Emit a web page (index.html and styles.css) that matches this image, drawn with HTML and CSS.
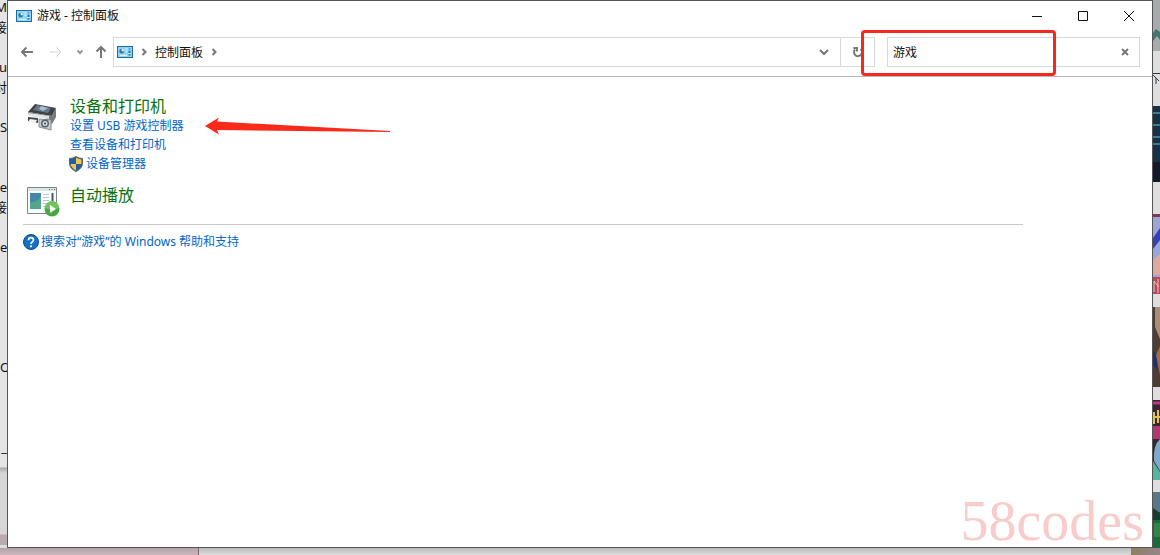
FILE: index.html
```html
<!DOCTYPE html>
<html lang="zh-CN">
<head>
  <meta charset="UTF-8">
  <meta name="viewport" content="width=device-width, initial-scale=1.0">
  <title>游戏 - 控制面板</title>
  <link rel="stylesheet" href="styles.css">
</head>
<body>
  <!-- shared icon -->
  <svg class="defs" width="0" height="0" aria-hidden="true">
    <symbol id="panel-icon" viewBox="0 0 16 12">
      <rect x=".5" y=".5" width="15" height="11" fill="#8fd4f2" stroke="#1c6ba0"/>
      <circle cx="4.7" cy="5.2" r="2.4" fill="#237fa8"/>
      <path d="M4.7 5.2V2.8A2.4 2.4 0 0 1 7.1 5.2z" fill="#e9faff"/>
      <path d="M8.5 3h2M8.5 5.2h2M3 9.3h7" stroke="#e9faff"/>
      <path d="M12.5 2.5v7" stroke="#1c7cb5" stroke-width="2"/>
      <path d="M11.2 4h2.6M11.2 7.5h2.6" stroke="#d9f5ff"/>
    </symbol>
  </svg>

  <aside class="behind-left">
    <span class="row-1">M</span>
    <span class="row-2">接</span>
    <span class="row-4">u</span>
    <span class="row-5">对</span>
    <span class="row-7 cut">Se</span>
    <span class="row-10">e</span>
    <span class="row-11">接</span>
    <span class="row-13 cut">es</span>
    <span class="row-19 cut">O</span>
    <span class="row-23">_</span>
  </aside>

  <div class="window">
    <header class="title-bar">
      <svg class="panel-icon" width="16" height="12"><use href="#panel-icon"/></svg>
      <h1>游戏 - 控制面板</h1>
      <div class="window-buttons">
        <button type="button" aria-label="最小化"><svg width="10" height="10"><path d="M0 5.5h10"/></svg></button>
        <button type="button" aria-label="最大化"><svg width="10" height="10"><path d="M.5.5h9v9h-9z"/></svg></button>
        <button type="button" aria-label="关闭"><svg width="10" height="10"><path d="M0 0l10 10M10 0L0 10"/></svg></button>
      </div>
    </header>

    <nav class="toolbar">
      <div class="nav-buttons">
        <button type="button" aria-label="后退"><svg width="14" height="12"><path d="M13 6H2M6.500 1.500L2 6l4.500 4.500"/></svg></button>
        <button type="button" class="disabled" aria-label="前进" disabled><svg width="14" height="12"><path d="M1 6h11M7.500 1.500L12 6l-4.500 4.500"/></svg></button>
        <button type="button" class="small" aria-label="最近浏览的位置"><svg width="8" height="6"><path d="M1.500 1.500L4 4l2.500-2.500"/></svg></button>
        <button type="button" aria-label="上移"><svg width="12" height="14"><path d="M6 13V2M1.500 6.500L6 2l4.500 4.500"/></svg></button>
      </div>
      <div class="address">
        <svg class="panel-icon" width="16" height="12"><use href="#panel-icon"/></svg>
        <svg class="chevron" width="6" height="8"><path d="M1.500 1L4.500 4l-3 3"/></svg>
        <a href="#">控制面板</a>
        <svg class="chevron" width="6" height="8"><path d="M1.500 1L4.500 4l-3 3"/></svg>
        <button type="button" class="history" aria-label="以前的位置"><svg width="10" height="8"><path d="M1 2l4 4 4-4"/></svg></button>
        <button type="button" class="refresh" aria-label="刷新"><svg width="12" height="12"><path d="M3 3.500A4 4 0 1 0 8.500 3M1.500 2H5v3.500"/></svg></button>
      </div>
      <div class="search">
        <input type="text" value="游戏" aria-label="搜索控制面板">
        <button type="button" aria-label="清除"><svg width="8" height="8"><path d="M1 1l6 6M7 1L1 7"/></svg></button>
        <div class="highlight"></div>
      </div>
    </nav>

    <main>
      <section class="result">
        <svg class="result-icon" viewBox="0 0 32 32" width="32" height="32">
          <path d="M9 3l21 4-4 8L2 11z" fill="#3c4248"/>
          <path d="M11 4l14 3-3 5-15-3z" fill="#677684"/>
          <path d="M15 5l7 2-5 3-4-2z" fill="#a9bfcc"/>
          <path d="M2 11l24 4 4-8v9l-4 7-6-1v-5L3 14z" fill="#75797c"/>
          <path d="M3 12l20 3v3L3 15z" fill="#e2e4e5"/>
          <path d="M2 16l10 1v5L2 20z" fill="#44494d"/>
          <path d="M4 18l7 1-2 4-7-2z" fill="#f1f2f2"/>
          <path d="M13 18l12 1v10l-12-3z" fill="#c9cccd" stroke="#888d90"/>
          <circle cx="19" cy="22.500" r="4" fill="#596166"/>
          <circle cx="19" cy="22.500" r="2.500" fill="#d2dde2"/>
          <circle cx="19" cy="22.500" r="1" fill="#31414a"/>
        </svg>
        <div>
          <h2><a href="#">设备和打印机</a></h2>
          <ul>
            <li><a href="#">设置 USB 游戏控制器</a></li>
            <li><a href="#">查看设备和打印机</a></li>
            <li class="admin">
              <svg width="14" height="16" viewBox="0 0 14 16">
                <path d="M7 .5Q10 2.500 13.500 2.500V7c0 4-3 7-6.500 8.500C3.500 14 .5 11 .5 7V2.500Q4 2.500 7 .5z" fill="#255f9b"/>
                <path d="M7 1.500Q10 3.300 12.500 3.400V8H7zM1.500 8H7v6.400C4 13 1.800 10.500 1.500 8z" fill="#f3c451"/>
                <path d="M7 .5Q10 2.500 13.500 2.500V7c0 4-3 7-6.500 8.500C3.500 14 .5 11 .5 7V2.500Q4 2.500 7 .5z" fill="none" stroke="#58616a"/>
              </svg>
              <a href="#">设备管理器</a>
            </li>
          </ul>
          <svg class="arrow" width="186" height="18" viewBox="0 0 186 18">
            <path d="M0 9L14 .5 12 4.500l173 9.500v1L12 13l2 4.500z"/>
          </svg>
        </div>
      </section>

      <section class="result">
        <svg class="result-icon autoplay" viewBox="0 0 34 32" width="34" height="32">
          <path d="M1.500 2.500h29v26h-29z" fill="#fbfcfc" stroke="#7b858b"/>
          <path d="M2 3h28v3H2z" fill="#dfe4e7"/>
          <path d="M23 4.500h1M25.500 4.500h1M28 4.500h1" stroke="#5b646a"/>
          <path d="M4 8h11v16H4z" fill="#4686ac"/>
          <path d="M4 24V17q7 1 11-6v13z" fill="#53a68c"/>
          <path d="M17 9.500h6M17 12.500h6M17 15.500h6M17 18.500h6M17 21.500h4" stroke="#bdc5ca"/>
          <path d="M26.500 8v8" stroke="#485967" stroke-width="2"/>
          <circle cx="26" cy="24" r="7.500" fill="#45a842"/>
          <path d="M19 23a7 7 0 0 1 14 0q-7 3-14 0z" fill="#73c45e"/>
          <path d="M24 20l6 4-6 4z" fill="#fff"/>
        </svg>
        <h2><a href="#">自动播放</a></h2>
      </section>

      <div class="help">
        <svg width="16" height="16" viewBox="0 0 16 16">
          <circle cx="8" cy="8" r="7.500" fill="#1272c4" stroke="#0a4b8c"/>
          <path d="M5.500 6.200C5.500 2.800 10.500 2.900 10.500 6c0 2-2.500 1.900-2.500 4" fill="none" stroke="#fff" stroke-width="1.700"/>
          <circle cx="8" cy="12.300" r="1.100" fill="#fff"/>
        </svg>
        <a href="#">搜索对“游戏”的 Windows 帮助和支持</a>
      </div>
    </main>
    <div class="watermark">58codes</div>
  </div>

  <!-- edge of the page open behind the window -->
  <svg class="behind-right" viewBox="0 0 7 548" preserveAspectRatio="none" aria-hidden="true">
    <path d="M0 0h7v548H0z" fill="#dedede"/>
    <path d="M0 0h7v51H0z" fill="#a8abab"/>
    <path d="M0 33l3-4 4 3v8l-3-4-4 5z" fill="#3f7772"/>
    <path d="M0 73.500h7" stroke="#29394a"/>
    <path d="M0 75l6 6M3 78v6" stroke="#243c55"/>
    <path d="M0 106h7v75H0z" fill="#163246"/>
    <path d="M0 113h7M0 125h7M0 137h7M0 144h7" stroke="#3f7b96" stroke-width="2"/>
    <path d="M0 162h7v20H0z" fill="#131b2a"/>
    <path d="M0 214h7v80H0z" fill="#9aa6d8"/>
    <path d="M0 214h7v3H0z" fill="#823756"/>
    <path d="M0 238l7-10v12l-7 9z" fill="#3540b5"/>
    <path d="M0 260l7-6v21H0z" fill="#dca99b"/>
    <path d="M0 277h7v17H0z" fill="#ba4a55"/>
    <path d="M1 292V281l4 5v7M5 279v8" fill="none" stroke="#f2c6c0"/>
    <path d="M0 307h7v80H0z" fill="#4f3c33"/>
    <path d="M2 307h5v32l-5-12z" fill="#a98e79"/>
    <path d="M0 350l4 5v15l-4-5z" fill="#252e67"/>
    <path d="M3 355l4-9v29z" fill="#a06d43"/>
    <path d="M0 400h7v80H0z" fill="#372536"/>
    <path d="M0 403h7" stroke="#be347f" stroke-width="3"/>
    <path d="M1 412v12M5 410v13M1 417h6" stroke="#e1c642" stroke-width="2"/>
    <path d="M0 426h7v13H0z" fill="#b2386f"/>
    <path d="M7 439Q0 445 1 461l6 10z" fill="#7fa9cb"/>
    <path d="M0 461l7 11v8H0z" fill="#54b4a0"/>
    <path d="M0 492h7v56H0z" fill="#1b6a38"/>
    <path d="M0 492h7v20H0z" fill="#59798a"/>
    <path d="M0 508l7 5v7H0z" fill="#183b34"/>
    <path d="M1 523h6v14H1z" fill="#34834b"/>
  </svg>

  <div class="behind-bottom">
    <div class="photo"></div>
    <div class="page"></div>
    <div class="thumb"></div>
  </div>
</body>
</html>
```
FILE: styles.css
```css
* {
  box-sizing: border-box;
}
body {
  display: grid;
  grid-template-columns: 7px 1fr 7px;
  grid-template-rows: 1fr 7px;
  min-height: 100vh;
  margin: 0;
  background: #dedede;
  color: #111;
  font-family: "Noto Sans", "Noto Sans CJK SC", sans-serif;
  font-size: 12px;
  line-height: 19px;
}
h1, h2, ul {
  margin: 0;
  padding: 0;
  font-size: 12px;
  font-weight: normal;
}
ul {
  list-style: none;
}
a {
  color: #0066cc;
  text-decoration: none;
}
a:hover {
  text-decoration: underline;
}
button {
  display: flex;
  align-items: center;
  justify-content: center;
  padding: 0;
  border: none;
  background: none;
}
svg {
  display: block;
  flex: none;
}
.defs {
  position: absolute;
}

/* What shows around the window */
.behind-left {
  display: grid;
  grid-template-columns: 7px;
  grid-auto-rows: 20px;
  align-content: start;
  justify-items: end;
  height: 0;
  min-height: 100%;
  margin-top: -3px;
  overflow: hidden;
  background: linear-gradient(#e4e4e4 470px, #aaa 471px, #d6d6d6 476px, #d6d6d6 537px, #b9aab0 538px);
  font-size: 13px;
  line-height: 20px;
}
.behind-left .cut {
  justify-self: start;
}
.row-1 { grid-row: 1; }
.row-2 { grid-row: 2; }
.row-4 { grid-row: 4; }
.row-5 { grid-row: 5; }
.row-7 { grid-row: 7; }
.row-10 { grid-row: 10; }
.row-11 { grid-row: 11; }
.row-13 { grid-row: 13; }
.row-19 { grid-row: 19; }
.row-23 { grid-row: 23; }
.behind-right {
  width: 100%;
  height: 100%;
}
.behind-bottom {
  display: flex;
  grid-column: 1 / -1;
}
.photo {
  width: 199px;
  border-right: 1px solid #77696f;
  background: linear-gradient(#b2a2a7, #cbb8be);
}
.page {
  flex: 1;
  background: linear-gradient(#bbb, #dcdcdc);
}
.thumb {
  width: 29px;
  background: linear-gradient(90deg, #8e8061, #96858b);
}

/* Window */
.window {
  position: relative;
  display: flex;
  flex-direction: column;
  min-width: 0;
  border: 1px solid #555;
  background: #fff;
}
.title-bar {
  display: flex;
  align-items: center;
  height: 29px;
  padding-left: 8px;
}
.title-bar h1 {
  margin-left: 5px;
}
.window-buttons {
  display: flex;
  margin-left: auto;
}
.window-buttons button {
  width: 46px;
  height: 29px;
}
.window-buttons path {
  fill: none;
  stroke: #111;
}

/* Toolbar */
.toolbar {
  display: flex;
  align-items: center;
  height: 47px;
  padding: 0 12px 2px;
  border-bottom: 1px solid #b5b9b7;
}
.toolbar path {
  fill: none;
  stroke: #777;
  stroke-width: 2;
}
.nav-buttons {
  display: flex;
  align-items: center;
  gap: 15px;
}
.nav-buttons .disabled path {
  stroke: #d2d2d2;
  stroke-width: 1;
}
.nav-buttons .small {
  margin: 0 -4px 0 -2px;
}
.nav-buttons .small path {
  stroke: #999;
}
.address {
  display: flex;
  flex: 1;
  align-items: center;
  height: 30px;
  margin-left: 6px;
  padding-left: 3px;
  border: 1px solid #d5d9d7;
}
.address a {
  color: #111;
}
.chevron {
  margin: 0 8px;
}
.address .history {
  width: 32px;
  height: 28px;
  margin-left: auto;
}
.address .refresh {
  width: 34px;
  height: 28px;
  border-left: 1px solid #d5d9d7;
}
.search {
  position: relative;
  display: flex;
  width: 253px;
  height: 30px;
  margin-left: 12px;
  border: 1px solid #d5d9d7;
}
.search input {
  flex: 1;
  min-width: 0;
  padding: 0 5px;
  border: none;
  outline: none;
  background: none;
  color: #111;
  font: inherit;
}
.search button {
  width: 28px;
}
.highlight {
  position: absolute;
  top: -8px;
  left: -27px;
  width: 195px;
  height: 46px;
  border: 3px solid #f5281e;
  border-radius: 4px;
  pointer-events: none;
}

/* Results */
main {
  padding: 19px 15px;
}
.result {
  display: grid;
  grid-template-columns: 34px 1fr;
  column-gap: 10px;
  margin-bottom: 12px;
  padding-left: 3px;
}
.result > div {
  position: relative;
}
.result-icon {
  margin-top: 5px;
}
.result-icon.autoplay {
  margin-top: 0;
}
.result h2 {
  font-size: 16px;
  line-height: 20px;
}
.result h2 a {
  color: #0b720b;
}
.admin {
  display: flex;
  align-items: center;
  gap: 3px;
  margin-left: -1px;
}
.arrow {
  position: absolute;
  top: 21px;
  left: 135px;
  fill: #fa2a1b;
}
.help {
  display: flex;
  align-items: center;
  gap: 2px;
  max-width: 1000px;
  margin-top: -5px;
  padding-top: 7px;
  border-top: 1px solid #c6c9ca;
}
.watermark {
  position: absolute;
  right: 8px;
  bottom: -6px;
  color: #f9cccc;
  font-family: "Liberation Serif", serif;
  font-size: 56px;
  line-height: 64px;
}
```
